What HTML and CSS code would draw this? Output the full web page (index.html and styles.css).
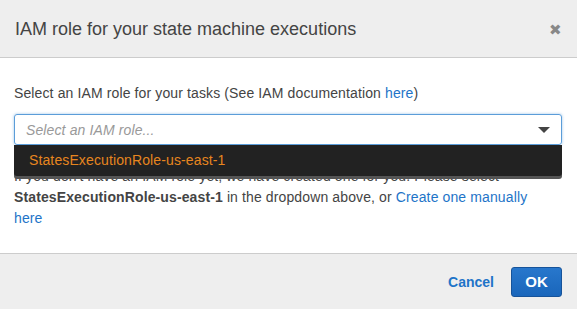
FILE: index.html
```html
<!DOCTYPE html>
<html>
  <head>
    <link rel="stylesheet" href="styles.css">
    <title>IAM role</title>
  </head>
  <body>
    <div class="modal">
      <div class="header">
        <p class="title">IAM role for your state machine executions</p>
        <span class="close">&#10006;</span>
      </div>

      <div class="content">
        <p class="label">Select an IAM role for your tasks (See IAM documentation <a href="#">here</a>)</p>

        <div class="picker">
          <div class="select">
            <span class="placeholder">Select an IAM role...</span>
            <span class="caret"></span>
          </div>
          <div class="menu">
            <div class="option">StatesExecutionRole-us-east-1</div>
          </div>
        </div>

        <p class="note">If you don't have an IAM role yet, we have created one for you. Please select
          <b>StatesExecutionRole-us-east-1</b> in the dropdown above, or <a href="#">Create one manually here</a></p>
      </div>

      <div class="footer">
        <a href="#" class="cancel">Cancel</a>
        <button class="ok">OK</button>
      </div>
    </div>
  </body>
</html>
```

FILE: styles.css
```css
body{
  margin: 0;
  font-family: "Liberation Sans", Arial, sans-serif;
  color: #444;
  background-color: white;
}

p{
  margin: 0;
}

a{
  color: #1e74c8;
  text-decoration: none;
}

.modal{
  width: 577px;
  height: 309px;
  display: flex;
  flex-direction: column;
}

.header{
  height: 57px;
  background-color: #eeeeee;
  border-bottom: 1px solid #cccccc;
  display: flex;
  align-items: center;
  padding-left: 15px;
  padding-right: 15px;
}

.title{
  flex: 1;
  font-size: 18px;
  padding-top: 2px;
}

.close{
  color: #888;
  font-size: 15px;
  padding-top: 3px;
}

.content{
  flex: 1;
  padding: 0 15px 0 14px;
  letter-spacing: 0.12px;
}

.label{
  font-size: 14px;
  margin-top: 27px;
  line-height: 16px;
}

.picker{
  position: relative;
  margin-top: 13px;
}

.select{
  height: 29px;
  border: 1px solid #5b9dd9;
  border-radius: 3px;
  box-shadow: 0 0 3px rgba(91, 157, 217, 0.6);
  display: flex;
  align-items: center;
  padding-left: 11px;
  padding-right: 11px;
}

.placeholder{
  flex: 1;
  color: #999;
  font-style: italic;
  font-size: 14px;
}

.caret{
  width: 0;
  height: 0;
  border-left: 6px solid transparent;
  border-right: 6px solid transparent;
  border-top: 6px solid #444;
  margin-top: 1px;
}

.menu{
  position: absolute;
  left: 0;
  right: 0;
  top: 31px;
  background-color: #222;
  border-radius: 0 0 3px 3px;
  box-shadow: 0 3px 0 #555;
  z-index: 2;
}

.option{
  color: #e7861f;
  font-size: 14px;
  height: 31px;
  line-height: 30px;
  padding-left: 15px;
}

.note{
  font-size: 14px;
  line-height: 21px;
  margin-top: 21px;
  padding-right: 25px;
}

.footer{
  height: 55px;
  background-color: #eeeeee;
  border-top: 1px solid #cccccc;
  display: flex;
  align-items: center;
  justify-content: flex-end;
  padding-right: 15px;
}

.cancel{
  font-size: 14px;
  font-weight: bold;
  margin-right: 17px;
  padding-top: 1px;
}

.ok{
  width: 51px;
  height: 30px;
  background: linear-gradient(#2877cc, #1a66bb);
  border: 1px solid #16539a;
  border-radius: 3px;
  color: white;
  font-family: "Liberation Sans", Arial, sans-serif;
  font-size: 15px;
  font-weight: bold;
  cursor: pointer;
}
```
